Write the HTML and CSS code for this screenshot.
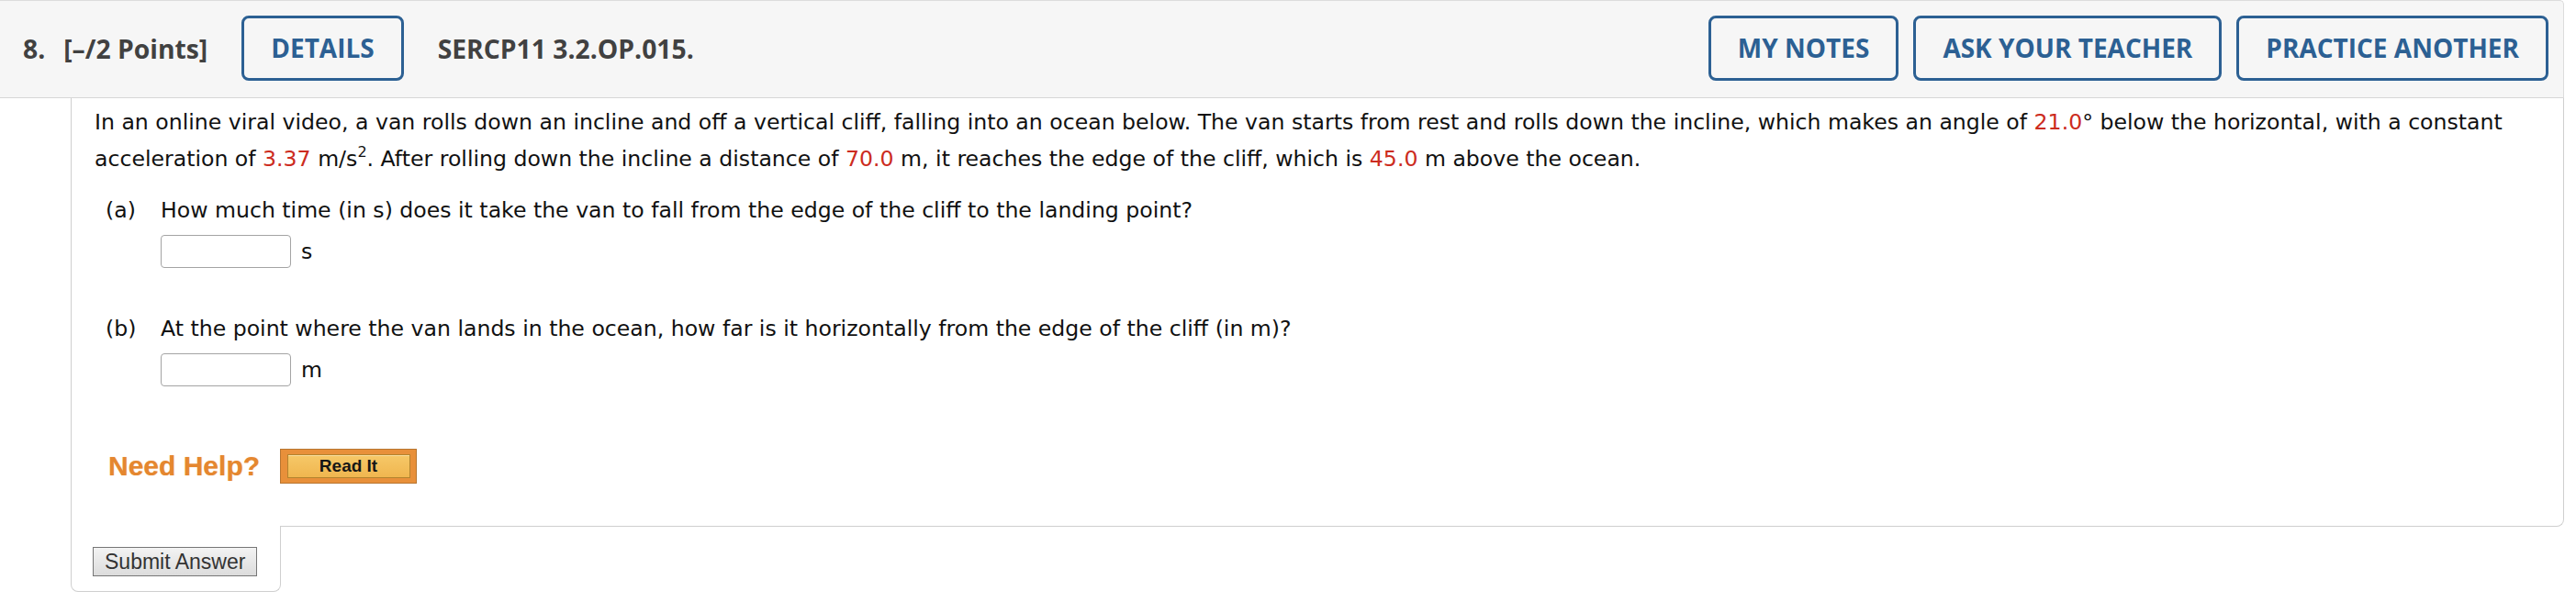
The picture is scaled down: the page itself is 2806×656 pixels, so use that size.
FILE: index.html
```html
<!DOCTYPE html>
<html lang="en">
<head>
<meta charset="utf-8">
<title>Question 8</title>
<link rel="stylesheet" href="styles.css">
</head>
<body>
<div class="question">
  <div class="q-header">
    <div class="q-title">
      <span class="q-num">8.</span>
      <span class="q-points">[–/2 Points]</span>
      <button class="hbtn">DETAILS</button>
      <span class="q-code">SERCP11 3.2.OP.015.</span>
    </div>
    <div class="q-actions">
      <button class="hbtn">MY NOTES</button>
      <button class="hbtn">ASK YOUR TEACHER</button>
      <button class="hbtn">PRACTICE ANOTHER</button>
    </div>
  </div>
  <div class="q-body">
    <p class="stem">In an online viral video, a van rolls down an incline and off a vertical cliff, falling into an ocean below. The van starts from rest and rolls down the incline, which makes an angle of <span class="val">21.0</span>° below the horizontal, with a constant acceleration of <span class="val">3.37</span> m/s<sup>2</sup>. After rolling down the incline a distance of <span class="val">70.0</span> m, it reaches the edge of the cliff, which is <span class="val">45.0</span> m above the ocean.</p>
    <div class="part part-a">
      <div class="part-label">(a)</div>
      <div class="part-main">
        <div class="part-text">How much time (in s) does it take the van to fall from the edge of the cliff to the landing point?</div>
        <div class="answer"><input class="field" type="text"><span class="unit">s</span></div>
      </div>
    </div>
    <div class="part part-b">
      <div class="part-label">(b)</div>
      <div class="part-main">
        <div class="part-text">At the point where the van lands in the ocean, how far is it horizontally from the edge of the cliff (in m)?</div>
        <div class="answer"><input class="field" type="text"><span class="unit">m</span></div>
      </div>
    </div>
    <div class="help">
      <span class="need-help">Need Help?</span>
      <span class="read-it"><span class="read-it-inner">Read It</span></span>
    </div>
  </div>
  <div class="submit-tab"><button class="submit">Submit Answer</button></div>
</div>
</body>
</html>
```
FILE: styles.css
```css
html, body {
  margin: 0;
  padding: 0;
  background: #ffffff;
}

.question {
  width: 2793px;
}

.q-header {
  display: flex;
  align-items: center;
  justify-content: space-between;
  background: #f6f6f6;
  border-top: 1px solid #dcdcdc;
  border-right: 1px solid #dcdcdc;
  border-bottom: 1px solid #d6d6d6;
  border-top-right-radius: 5px;
  padding: 16px 16px 18px 25px;
  font-family: "Open Sans", "Liberation Sans", sans-serif;
  font-weight: 700;
  font-size: 28.3px;
  color: #414141;
}

.q-title {
  display: flex;
  align-items: center;
}

.q-num {
  margin-right: 20px;
}

.q-points {
  margin-right: 37px;
}

.q-code {
  margin-left: 37px;
}

.q-actions {
  display: flex;
  gap: 16px;
}

.hbtn {
  font-family: "Open Sans", "Liberation Sans", sans-serif;
  font-weight: 700;
  font-size: 28px;
  line-height: 41px;
  color: #2c6093;
  background: transparent;
  border: 3px solid #2c6093;
  border-radius: 8px;
  padding: 12px 29px;
  margin: 0;
  letter-spacing: 0;
}

.q-body {
  margin-left: 77px;
  border-left: 1px solid #cfcfcf;
  border-right: 1px solid #cfcfcf;
  border-bottom: 1px solid #cfcfcf;
  border-bottom-right-radius: 8px;
  padding: 6px 20px 46px 25px;
  font-family: Verdana, "DejaVu Sans", sans-serif;
  font-size: 23.6px;
  line-height: 40px;
  color: #111111;
}

.stem {
  margin: 0;
}

.val {
  color: #cc2b20;
}

sup {
  font-size: 16px;
  line-height: 16px;
  vertical-align: 10px;
}

.part {
  display: flex;
  padding-left: 12px;
}

.part-a {
  margin-top: 16px;
}

.part-b {
  margin-top: 46px;
}

.part-label {
  width: 60px;
  flex: none;
}

.answer {
  display: flex;
  align-items: center;
  margin-top: 7px;
}

.field {
  box-sizing: border-box;
  width: 142px;
  height: 36px;
  border: 1px solid #a4a4a4;
  border-radius: 4px;
  background: #ffffff;
  margin: 0;
  padding: 0;
}

.unit {
  margin-left: 11px;
  line-height: 24px;
}

.help {
  display: flex;
  align-items: center;
  margin-top: 68px;
  padding-left: 15px;
}

.need-help {
  font-family: "Liberation Sans", Arial, sans-serif;
  font-weight: 700;
  font-size: 30px;
  line-height: 38px;
  color: #e5872f;
  text-shadow: 0 0 1px rgba(229, 135, 47, 0.6);
  margin-right: 22px;
}

.read-it {
  box-sizing: border-box;
  width: 149px;
  height: 38px;
  display: flex;
  align-items: center;
  justify-content: center;
  background: #e8903a;
  border: 1px solid #b77530;
}

.read-it-inner {
  box-sizing: border-box;
  width: 134px;
  height: 26px;
  display: flex;
  align-items: center;
  justify-content: center;
  background: linear-gradient(#f6c868, #f0b64f);
  border: 1px solid #b3832e;
  box-shadow: inset 0 1px 0 #fbe0a0;
  font-family: "Liberation Sans", Arial, sans-serif;
  font-weight: 700;
  font-size: 19px;
  color: #161616;
}

.submit-tab {
  box-sizing: border-box;
  width: 229px;
  margin-left: 77px;
  margin-top: -1px;
  position: relative;
  background: #ffffff;
  border-left: 1px solid #cfcfcf;
  border-right: 1px solid #cfcfcf;
  border-bottom: 1px solid #cfcfcf;
  border-bottom-left-radius: 8px;
  border-bottom-right-radius: 8px;
  padding: 23px 0 16px 23px;
}

.submit {
  display: block;
  font-family: "Liberation Sans", Arial, sans-serif;
  font-size: 23px;
  line-height: 26px;
  color: #333333;
  background: linear-gradient(#f3f3f3, #dcdcdc);
  border: 1px solid #767676;
  border-radius: 0;
  padding: 2px 12px;
  margin: 0;
}
```
